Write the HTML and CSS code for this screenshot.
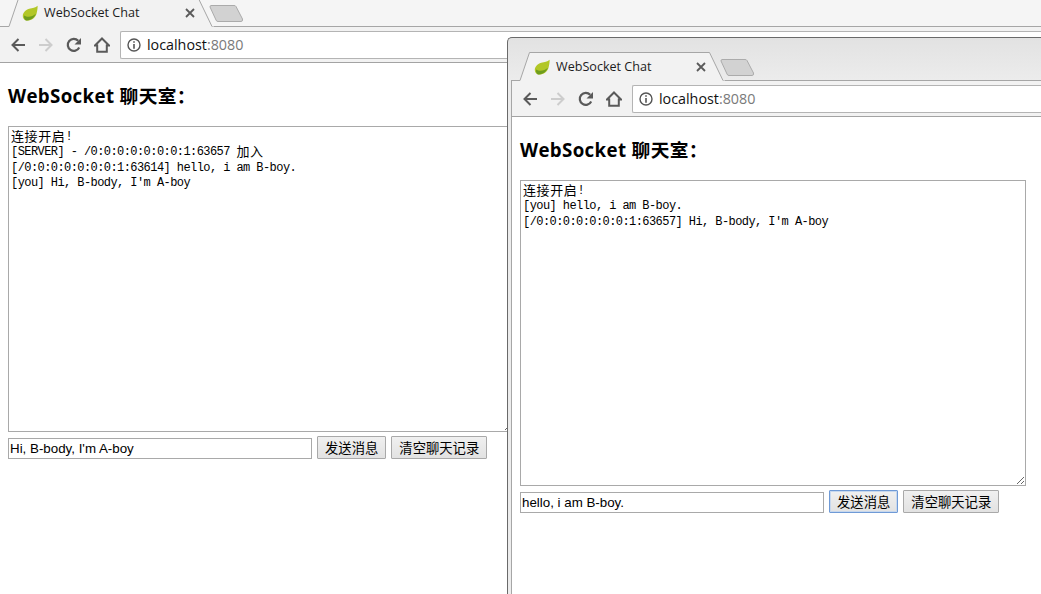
FILE: index.html
```html
<!DOCTYPE html>
<html lang="zh-CN">
<head>
  <meta charset="UTF-8">
  <title>WebSocket Chat</title>
  <link rel="stylesheet" href="styles.css">
</head>
<body>
  <svg class="icon-defs" aria-hidden="true">
    <symbol id="tab-shape" viewBox="0 0 206 29">
      <path d="M0 29 L0 28.5 H1 L10.5 .5 H190.5 L204 28.5 H206 V29 Z" fill="#f2f2f2" stroke="none"/>
      <path d="M0 28.5 H1 L10.5 .5 H190.5 L204 28.5" fill="none" stroke="#a6a6a6"/>
    </symbol>
    <symbol id="leaf" viewBox="0 0 16 16">
      <path d="M15.6 .8 C13.5 3.2 10.5 2.8 7.2 3.8 C3.2 5 .8 8 .8 11 C.8 13 1.8 14.5 3.5 15.2 C8 16.2 13 14 14.6 8.4 C15.2 6 15.7 3 15.6 .8Z" fill="#b2c727"/>
      <path d="M2 10.4 C6 13 10.5 11.6 13.8 8.8 C12.6 13 7.6 16.2 3.5 15.2 C2.2 14.4 1.8 12 2 10.4Z" fill="#6f9d1e"/>
    </symbol>
    <symbol id="close" viewBox="0 0 10 10">
      <path d="M1 1 L9 9 M9 1 L1 9" stroke="#5a5a5a" stroke-width="1.8" fill="none"/>
    </symbol>
    <symbol id="newtab" viewBox="0 0 36 19">
      <path d="M2 1.5 H25 Q26.5 1.5 27 2.5 L33.5 15 Q34 17.5 32 17.5 H9 Q7.5 17.5 7 16 L1 3 Q1 1.5 2 1.5Z" fill="#d2d2d2" stroke="#ababab"/>
    </symbol>
    <symbol id="arrow-left" viewBox="0 0 16 16">
      <path d="M15 8 H2.5 M8.5 2 L2.5 8 L8.5 14" fill="none" stroke="currentColor" stroke-width="2"/>
    </symbol>
    <symbol id="arrow-right" viewBox="0 0 16 16">
      <path d="M1 8 H13.5 M7.5 2 L13.5 8 L7.5 14" fill="none" stroke="currentColor" stroke-width="2"/>
    </symbol>
    <symbol id="reload" viewBox="0 0 16 16">
      <path d="M13.2 10.5 A6 6 0 1 1 12.2 3.8" fill="none" stroke="currentColor" stroke-width="2.2"/>
      <path d="M15 1 V7.5 H8.5Z" fill="currentColor"/>
    </symbol>
    <symbol id="home" viewBox="0 0 16 16">
      <path d="M8 1.5 L15 8.5 H12.8 V14.8 H3.2 V8.5 H1Z" fill="none" stroke="currentColor" stroke-width="2" stroke-linejoin="miter"/>
    </symbol>
    <symbol id="info" viewBox="0 0 14 14">
      <circle cx="7" cy="7" r="6" fill="none" stroke="currentColor" stroke-width="1.4"/>
      <path d="M6.2 3.2 H7.8 V4.8 H6.2Z M6.2 6 H7.8 V10.8 H6.2Z" fill="currentColor"/>
    </symbol>
  </svg>

  <div class="window window-back">
    <div class="tabstrip">
      <div class="tab">
        <svg class="tab-bg"><use href="#tab-shape"/></svg>
        <svg class="favicon"><use href="#leaf"/></svg>
        <span class="tab-title">WebSocket Chat</span>
        <svg class="tab-close"><use href="#close"/></svg>
      </div>
      <svg class="new-tab"><use href="#newtab"/></svg>
    </div>
    <div class="toolbar">
      <span class="nav-btn"><svg><use href="#arrow-left"/></svg></span>
      <span class="nav-btn disabled"><svg><use href="#arrow-right"/></svg></span>
      <span class="nav-btn"><svg><use href="#reload"/></svg></span>
      <span class="nav-btn"><svg><use href="#home"/></svg></span>
      <div class="omnibox">
        <svg class="info-icon"><use href="#info"/></svg>
        <span class="host">localhost</span><span class="port">:8080</span>
      </div>
    </div>
    <div class="page">
      <h3>WebSocket 聊天室：</h3>
      <div class="chat-log">
        <div><span class="cjk">连接开启</span>!</div>
        <div>[SERVER] - /0:0:0:0:0:0:0:1:63657 <span class="cjk">加入</span></div>
        <div>[/0:0:0:0:0:0:0:1:63614] hello, i am B-boy.</div>
        <div>[you] Hi, B-body, I'm A-boy</div>
      </div>
      <form class="send-row">
        <input type="text" class="msg-input" value="Hi, B-body, I'm A-boy">
        <button type="button">发送消息</button>
        <button type="button">清空聊天记录</button>
      </form>
    </div>
  </div>

  <div class="window window-front">
    <div class="tabstrip">
      <div class="tab">
        <svg class="tab-bg"><use href="#tab-shape"/></svg>
        <svg class="favicon"><use href="#leaf"/></svg>
        <span class="tab-title">WebSocket Chat</span>
        <svg class="tab-close"><use href="#close"/></svg>
      </div>
      <svg class="new-tab"><use href="#newtab"/></svg>
    </div>
    <div class="toolbar">
      <span class="nav-btn"><svg><use href="#arrow-left"/></svg></span>
      <span class="nav-btn disabled"><svg><use href="#arrow-right"/></svg></span>
      <span class="nav-btn"><svg><use href="#reload"/></svg></span>
      <span class="nav-btn"><svg><use href="#home"/></svg></span>
      <div class="omnibox">
        <svg class="info-icon"><use href="#info"/></svg>
        <span class="host">localhost</span><span class="port">:8080</span>
      </div>
    </div>
    <div class="page">
      <h3>WebSocket 聊天室：</h3>
      <div class="chat-log">
        <div><span class="cjk">连接开启</span>!</div>
        <div>[you] hello, i am B-boy.</div>
        <div>[/0:0:0:0:0:0:0:1:63657] Hi, B-body, I'm A-boy</div>
      </div>
      <form class="send-row">
        <input type="text" class="msg-input" value="hello, i am B-boy.">
        <button type="button" class="focused">发送消息</button>
        <button type="button">清空聊天记录</button>
      </form>
    </div>
  </div>
</body>
</html>
```

FILE: styles.css
```css
html, body {
  margin: 0;
  height: 100%;
  overflow: hidden;
  background: #fff;
}
body {
  position: relative;
  font-family: "Open Sans", "Noto Sans CJK SC", sans-serif;
}
.icon-defs {
  width: 0;
  height: 0;
  position: absolute;
}

/* browser windows sit on a free desktop */
.window {
  position: absolute;
  bottom: 0;
  right: 0;
  display: flex;
  flex-direction: column;
  box-sizing: border-box;
  overflow: hidden;
}
.window-back {
  left: 0;
  top: 0;
  background: #f5f5f5;
}
.window-back .tabstrip {
  height: 27px;
}
.window-front {
  left: 507px;
  top: 37px;
  padding-left: 3px;
  border: 1px solid #6a6a6a;
  border-width: 1px 0 0 1px;
  border-radius: 5px 0 0 0;
  background: linear-gradient(#e2e2e2, #ececec 43px);
}
.window-front .tabstrip {
  height: 43px;
  padding-left: 8px;
}
.window-front .toolbar,
.window-front .page {
  border-left: 1px solid #a6a6a6;
}

.tabstrip {
  display: flex;
  flex: none;
  align-items: flex-end;
  box-sizing: border-box;
  padding-left: 8px;
  border-bottom: 1px solid #a6a6a6;
}
.tab {
  position: relative;
  flex: none;
  display: flex;
  align-items: center;
  width: 206px;
  height: 29px;
  margin-bottom: -1px;
  padding-left: 14px;
  box-sizing: border-box;
}
.window-front .tab {
  padding-left: 15px;
}
.tab-bg {
  position: absolute;
  left: 0;
  top: 0;
  width: 206px;
  height: 29px;
}
.favicon {
  position: relative;
  width: 16px;
  height: 16px;
  margin-top: 1px;
}
.tab-title {
  position: relative;
  margin-left: 6px;
  font-size: 12.6px;
  color: #1c1c1c;
}
.tab-close {
  position: absolute;
  left: 177px;
  top: 10px;
  width: 10px;
  height: 10px;
}
.new-tab {
  flex: none;
  width: 36px;
  height: 19px;
  margin: 0 0 3px -5px;
}

.toolbar {
  display: flex;
  flex: none;
  align-items: center;
  height: 36px;
  box-sizing: border-box;
  padding-left: 4px;
  background: #f2f2f2;
  border-bottom: 1px solid #a3a3a3;
}
.nav-btn {
  display: flex;
  justify-content: center;
  width: 28px;
  color: #5a5a5a;
}
.nav-btn.disabled {
  color: #cdcdcd;
}
.nav-btn svg {
  width: 16px;
  height: 16px;
}
.omnibox {
  display: flex;
  align-items: center;
  flex: 1;
  height: 28px;
  box-sizing: border-box;
  margin-left: 4px;
  padding-left: 6px;
  background: #fff;
  border: 1px solid #b4b4b4;
  border-right: none;
  border-radius: 2px 0 0 2px;
  font-size: 14.3px;
}
.info-icon {
  width: 14px;
  height: 14px;
  margin-right: 6px;
  color: #555;
}
.host {
  color: #111;
}
.port {
  color: #7a7a7a;
}

.page {
  flex: 1;
  padding: 20px 8px 0;
  background: #fff;
}
h3 {
  margin: 0 0 18px;
  font-size: 18.72px;
  letter-spacing: 0.35px;
  line-height: 25px;
  font-weight: bold;
  color: #000;
}
.chat-log {
  width: 506px;
  height: 306px;
  box-sizing: border-box;
  padding: 3px 2px 2px;
  border: 1px solid #a9a9a9;
  overflow: auto;
  resize: both;
  font-family: "Liberation Mono", monospace;
  font-size: 12px;
  letter-spacing: -0.57px;
  line-height: 15.33px;
  color: #000;
}
.chat-log div {
  height: 15.33px;
}
.cjk {
  font-family: "Noto Sans CJK SC", sans-serif;
  font-size: 13px;
  line-height: 0;
  letter-spacing: 0.6px;
  vertical-align: -1px;
}
.send-row {
  display: flex;
  align-items: flex-end;
  gap: 5px;
  margin-top: 4px;
}
.msg-input {
  width: 304px;
  height: 21px;
  box-sizing: border-box;
  padding: 1px;
  border: 1px solid #a9a9a9;
  font-family: "Liberation Sans", sans-serif;
  font-size: 13.33px;
  color: #000;
  outline: none;
}
button {
  height: 23px;
  padding: 0 7px;
  box-sizing: border-box;
  border: 1px solid #a9a9a9;
  border-radius: 1px;
  background: linear-gradient(#f0f0f0, #e2e2e2);
  font-family: "Noto Sans CJK SC", sans-serif;
  font-size: 13.33px;
  color: #000;
}
button.focused {
  border-color: #6f9ad6;
  box-shadow: inset 0 0 0 1px #c7d8ee;
}
```
